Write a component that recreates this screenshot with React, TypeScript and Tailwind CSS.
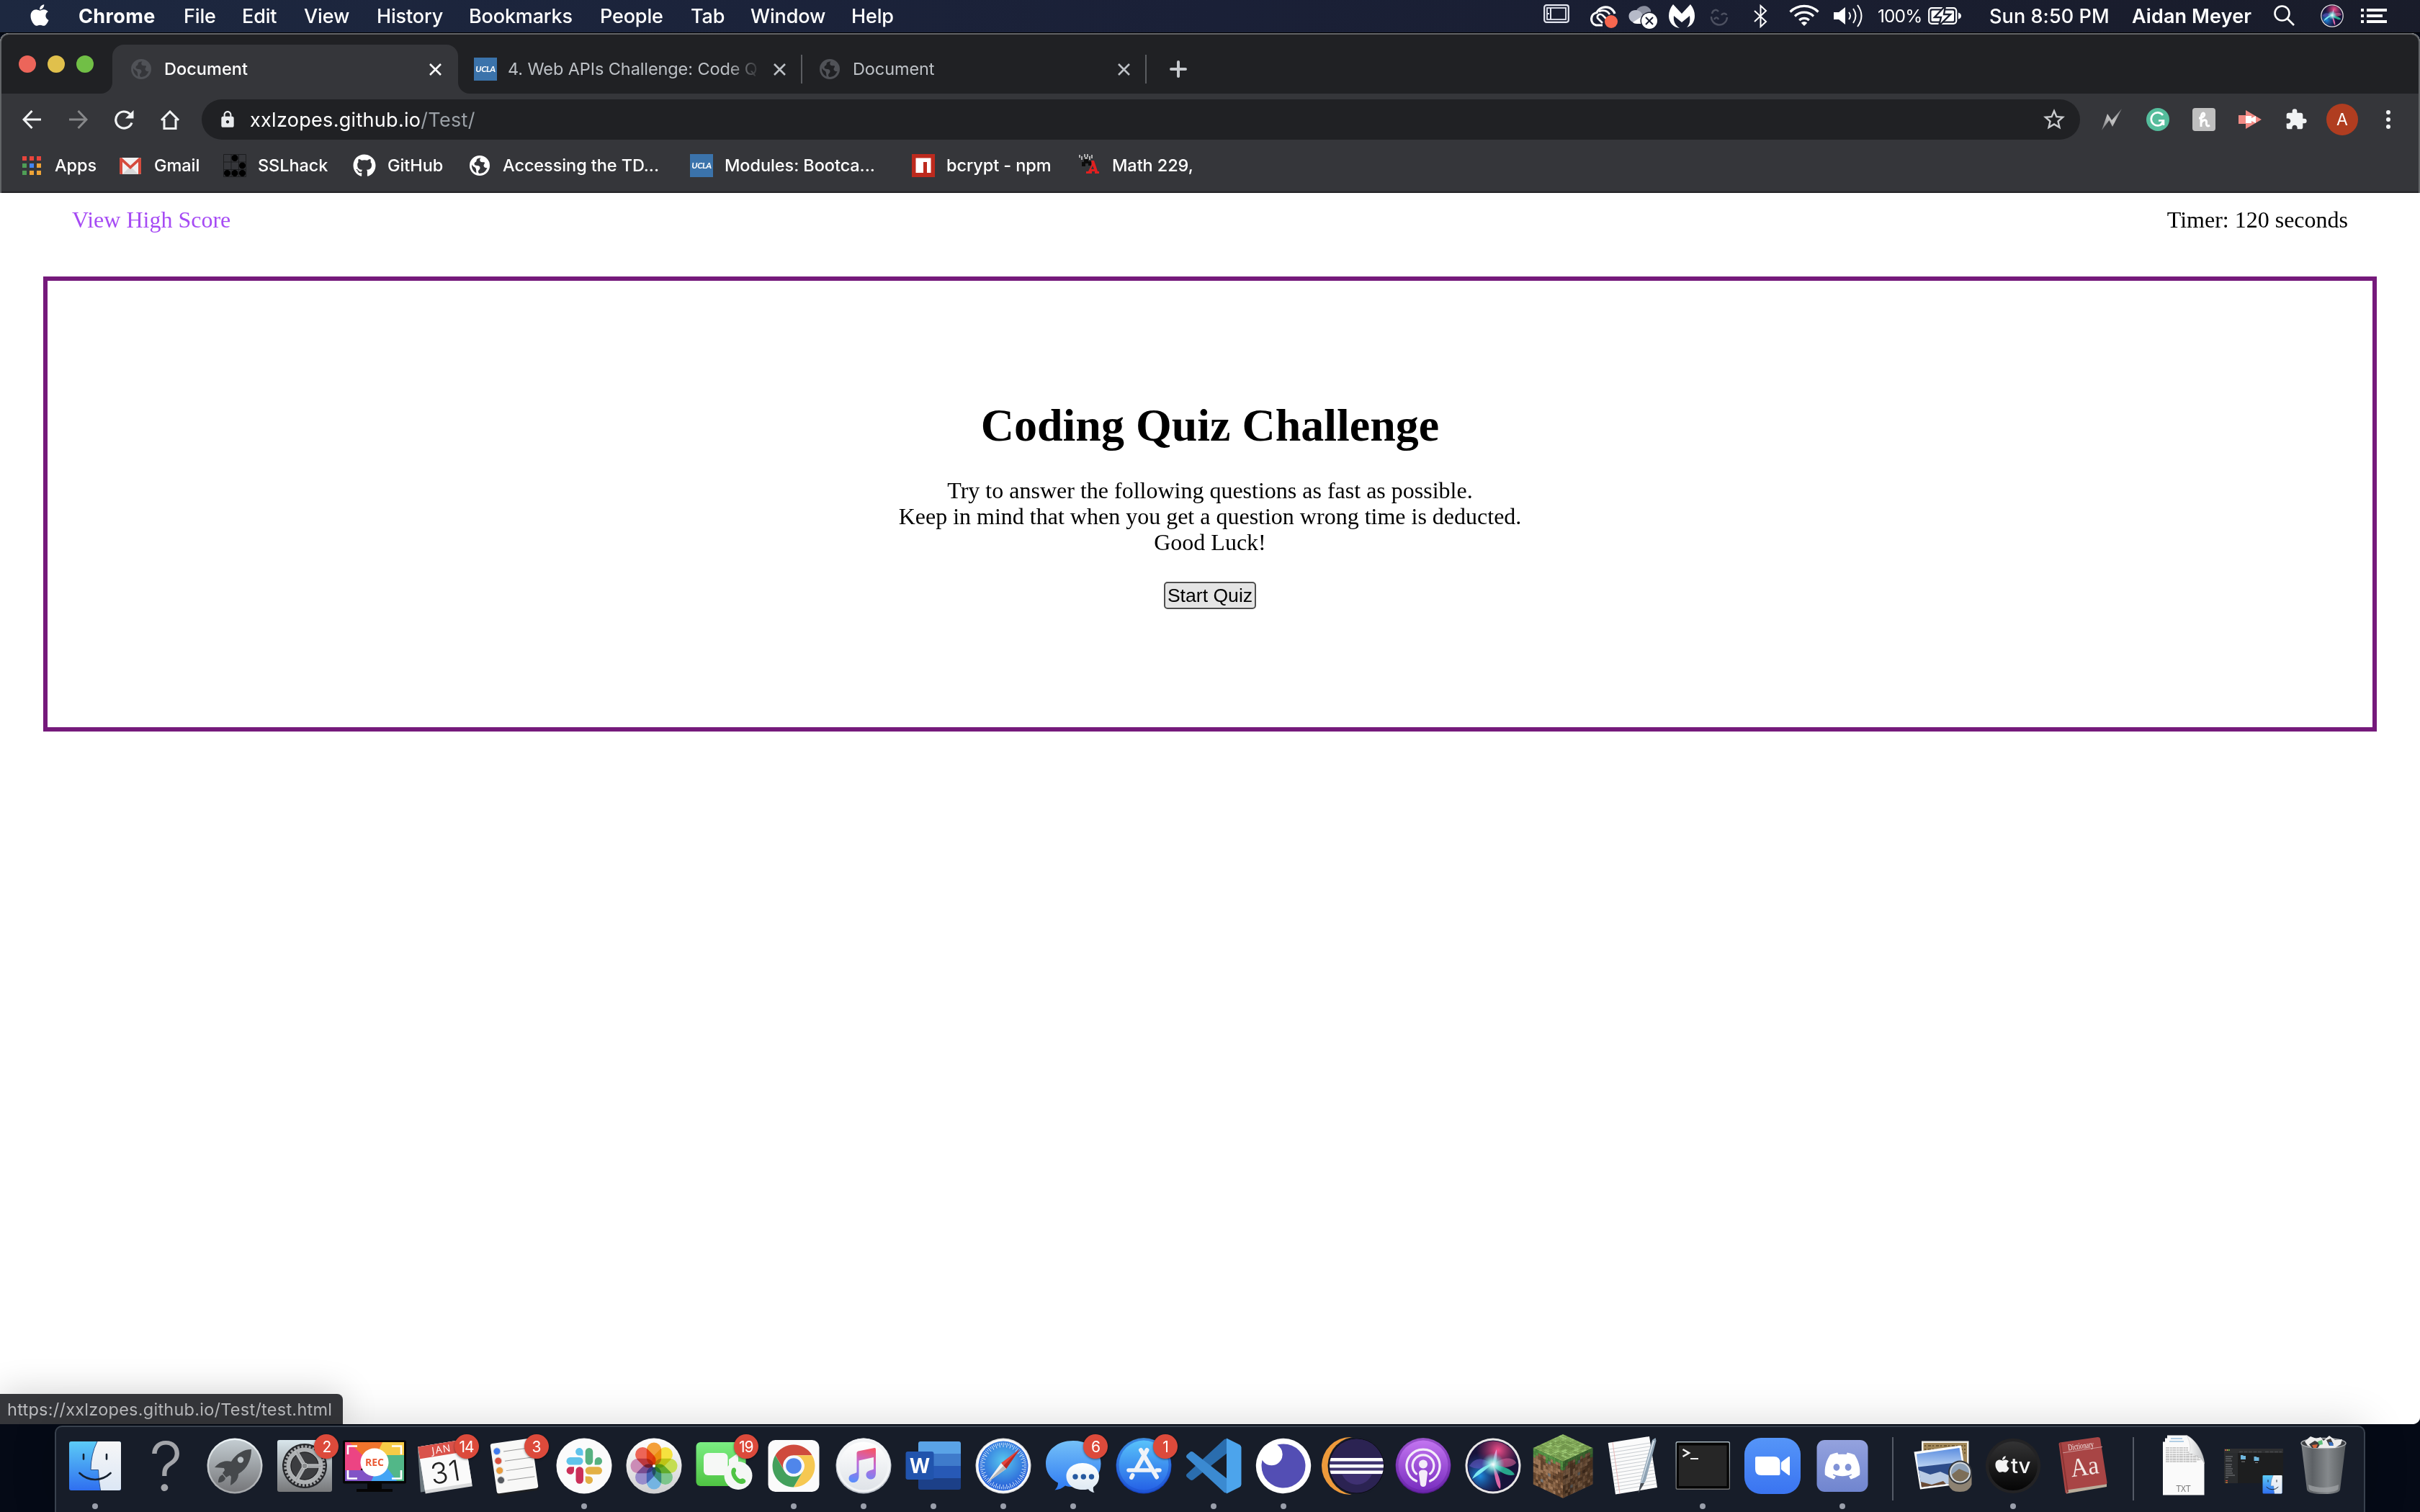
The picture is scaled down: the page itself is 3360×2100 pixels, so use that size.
import type { ReactNode } from "react";
import { FaApple, FaDiscord, FaGithub } from "react-icons/fa";
import { MdExtension, MdStarBorder, MdLock } from "react-icons/md";

/* ---------- menu bar ---------- */

const menus = [
  { label: "Chrome", cls: "w-[146px] font-bold tracking-[0.4px]" },
  { label: "File", cls: "w-[81px] font-medium" },
  { label: "Edit", cls: "w-[86px] font-medium" },
  { label: "View", cls: "w-[101px] font-medium" },
  { label: "History", cls: "w-[128px] font-medium" },
  { label: "Bookmarks", cls: "w-[182px] font-medium" },
  { label: "People", cls: "w-[126px] font-medium" },
  { label: "Tab", cls: "w-[83px] font-medium" },
  { label: "Window", cls: "w-[140px] font-medium" },
  { label: "Help", cls: "w-[80px] font-medium" },
];

function MenuBar() {
  return (
    <div className="flex h-[46px] shrink-0 items-center whitespace-nowrap border-b border-black bg-linear-to-r from-[#1d2840] via-[#1a2037] to-[#191c2a] pl-[40px] text-[27px] leading-none tracking-[-0.15px] text-white">
      <FaApple className="mt-[-3px] mr-[39px] h-[34px] w-[30px]" />
      {menus.map((m) => (
        <div key={m.label} className={m.cls}>{m.label}</div>
      ))}
      <div className="ml-auto flex h-full items-center">
        <svg className="mb-[7px] mr-[26px] h-[26px] w-[36px]" viewBox="0 0 36 26" fill="none" stroke="#e4e6f0">
          <rect x="1.2" y="1.2" width="33.6" height="23.6" rx="3" strokeWidth="2.2" />
          <rect x="5" y="5" width="26" height="16" strokeWidth="1.8" />
          <path d="M10 5V21M5 13H8" strokeWidth="2" />
        </svg>
        <svg className="mr-[14px] h-[32px] w-[42px]" viewBox="0 0 42 32" fill="none" stroke="#fff" strokeWidth="3.2">
          <path d="M20 28H11A9 9 0 0 1 12 10.500C15 4 23 1 30 4C34 6 36 9 37 12" />
          <path d="M20 25L13 18C12 14 16 11 20 14L25 19M15 9C21 6 27 8 30 13" strokeWidth="2.6" />
          <circle cx="32" cy="23" r="9" fill="#f7674f" stroke="none" />
        </svg>
        <svg className="mr-[15px] h-[36px] w-[41px]" viewBox="0 0 41 36">
          <path d="M10 13C11 3 26 -1 31 9V22H14Z" fill="#8b8f9f" />
          <path d="M12 27C-3 27-3 9 10 9C16 9 19 13 20 17L8 27Z" fill="#b6bac8" />
          <path d="M6 26L20 17L30 20V28H12C9 28 7 27 6 26Z" fill="#fff" />
          <circle cx="29" cy="24" r="12.500" fill="#1a1e30" />
          <circle cx="29" cy="24" r="11" fill="#fff" />
          <path d="M24 19L34 29M34 19L24 29" stroke="#1a1e30" strokeWidth="2" />
        </svg>
        <svg className="mr-[20px] h-[33px] w-[36px]" viewBox="0 0 36 33" fill="#fff">
          <path d="M6 0L18 13L30 0C34 5 36 10 36 16C36 24 32 30 25 32C29 28 30 23 29 16L18 25L7 16C6 24 9 29 15 33C6 32 0 25 0 16C0 10 2 5 6 0Z" />
        </svg>
        <svg className="mr-[35px] mt-[4px] h-[26px] w-[27px]" viewBox="0 0 27 26" fill="none" stroke="#4c5060" strokeWidth="2.4">
          <path d="M3 11A11 11 0 1 0 25 12M4 7C5 2 10 0 13 4M17 9C19 5 24 7 24 9M7 15C9 11 12 12 13 15" />
        </svg>
        <svg className="mr-[30px] h-[33px] w-[19px]" viewBox="0 0 19 33" fill="none" stroke="#fff" strokeWidth="2">
          <path d="M1 9L17 24L9.500 31V2L17 9L1 24" />
        </svg>
        <svg className="mb-[4px] mr-[20px] h-[30px] w-[42px]" viewBox="0 0 42 30" fill="none" stroke="#fff" strokeWidth="3.200">
          <path d="M1.500 10.500A27.500 27.500 0 0 1 40.500 10.500M8 16.500A18.500 18.500 0 0 1 34 16.500M14.200 22.200A9.800 9.800 0 0 1 27.800 22.200" />
          <path d="M21 30L16.800 25.700A6 6 0 0 1 25.200 25.700Z" fill="#fff" stroke="none" />
        </svg>
        <svg className="mb-[2px] mr-[20px] h-[32px] w-[41px]" viewBox="0 0 41 32" fill="none" stroke="#fff" strokeWidth="2">
          <path d="M0 11H7L16 4V28L7 21H0Z" fill="#fff" stroke="none" />
          <path d="M21 11Q25 16 21 21M27 6Q34 16 27 26M33 1Q44 16 33 31" />
        </svg>
        <div className="mr-[8px] w-[62px] text-[24.500px] tracking-[-0.900px]">100%</div>
        <svg className="mb-[2px] mr-[38px] h-[26px] w-[47px]" viewBox="0 0 47 26">
          <rect x="1.200" y="2.200" width="38" height="21.600" rx="4" fill="none" stroke="#fff" strokeWidth="2.200" />
          <rect x="4.500" y="5.500" width="31.500" height="15" rx="1.500" fill="#fff" />
          <path d="M42 8.500Q46 9.500 46 13T42 17.500Z" fill="#fff" />
          <path d="M24 -1L9 15H18L15 27L31 11H22Z" fill="#fff" stroke="#1a1e2e" strokeWidth="2.400" />
        </svg>
        <div className="w-[198px] font-medium tracking-[0.1px]">Sun 8:50 PM</div>
        <div className="w-[197px] font-semibold tracking-[0.1px]">Aidan Meyer</div>
        <svg className="mb-[2px] mr-[36px] h-[29px] w-[29px]" viewBox="0 0 29 29" fill="none" stroke="#fff" strokeWidth="2.600">
          <circle cx="11.500" cy="11.500" r="10" />
          <path d="M18.500 18.500L28 28" />
        </svg>
        <div className="mb-[2px] mr-[24px] size-[32px]"><SiriArt id="siri-menu" vb="9 9 78 78" /></div>
        <svg className="mb-[1px] mr-[46px] h-[20px] w-[36px]" viewBox="0 0 36 20" fill="#fff">
          <path d="M0 0H4V4H0ZM8 0H36V4H8ZM0 8H4V12H0ZM8 8H30V12H8ZM0 16H4V20H0ZM8 16H36V20H8Z" />
        </svg>
      </div>
    </div>
  );
}

/* ---------- browser chrome ---------- */

function Globe({ className }: { className: string }) {
  return (
    <svg className={className} viewBox="0 0 28 28" fill="currentColor">
      <path
        fillRule="evenodd"
        d="M14 0A14 14 0 1 1 14 28A14 14 0 1 1 14 0ZM15.500 3.200C11 3.600 9.500 5 9.500 7.500C9.500 9 7 9 6.500 11C6 13 8 14 10.500 14C13.500 14 14.500 15.500 14.500 17.500C14.500 19.500 12 20 12 22C12 23.500 12.500 24.500 13.500 25C19 25.200 23 21.500 24.500 17C22.500 17.500 20 16.500 19.500 14.500C19.200 12.500 21 12 21 10C21 8.500 18.500 9.500 16.500 9C14 8.500 13.500 5.500 15.500 3.200ZM3 12.500C2.500 18 5.500 22.500 9.500 24.300C9 21.500 9.500 19 8 17C6.500 15.500 4 15 3 12.500Z"
      />
    </svg>
  );
}

function Ucla() {
  return (
    <div className="flex size-[32px] shrink-0 items-center justify-center bg-[#3b73ab] font-['Lato'] text-[12px] font-bold italic leading-none tracking-[-0.5px] text-white">
      UCLA
    </div>
  );
}

function Close({ className }: { className: string }) {
  return (
    <svg className={className} viewBox="0 0 17 17" fill="none" stroke="currentColor" strokeWidth="2.600">
      <path d="M1 1L16 16M16 1L1 16" />
    </svg>
  );
}

function TabStrip() {
  return (
    <div className="flex h-[82px] text-[23.500px] leading-none tracking-[-0.1px]">
      <div className="flex w-[138px] gap-[16px] pl-[24px] pt-[29px]">
        <span className="size-[24px] rounded-full bg-[#ec655a]" />
        <span className="size-[24px] rounded-full bg-[#e0c04c]" />
        <span className="size-[24px] rounded-full bg-[#71bf46]" />
      </div>
      <svg className="mt-auto h-[16px] w-[16px]" viewBox="0 0 16 16"><path d="M16 0V16H0A16 16 0 0 0 16 0Z" fill="#35363a" /></svg>
      <div className="mt-[14px] flex h-[68px] w-[480px] items-center rounded-t-[16px] bg-[#35363a] pl-[26px] text-white">
        <Globe className="size-[28px] text-[#505257]" />
        <div className="ml-[18px] w-[368px] font-medium tracking-[0.05px]">Document</div>
        <Close className="size-[17px]" />
      </div>
      <svg className="mt-auto h-[16px] w-[16px]" viewBox="0 0 16 16"><path d="M0 0V16H16A16 16 0 0 1 0 0Z" fill="#35363a" /></svg>
      <div className="mt-[14px] flex h-[68px] items-center pl-[6px] text-[#bdc1c6]">
        <Ucla />
        <div className="ml-[15px] w-[353px] whitespace-nowrap leading-[32px] mask-r-from-86% mask-r-to-100%">4. Web APIs Challenge: Code Q</div>
        <Close className="ml-[16px] size-[17px]" />
        <div className="ml-[21px] h-[40px] w-[2px] bg-[#5b5d61]" />
        <Globe className="ml-[24px] size-[28px] text-[#505257]" />
        <div className="ml-[18px] w-[368px]">Document</div>
        <Close className="size-[17px]" />
        <div className="ml-[21px] h-[40px] w-[2px] bg-[#5b5d61]" />
        <svg className="ml-[32px] size-[24px]" viewBox="0 0 24 24" stroke="#c6c9cd" strokeWidth="4" strokeLinecap="round">
          <path d="M2 12H22M12 2V22" />
        </svg>
      </div>
    </div>
  );
}

function Toolbar() {
  return (
    <div className="flex h-[72px] items-center bg-[#35363a] pl-[29px] text-[#f1f3f4]">
      <svg className="h-[26px] w-[27px]" viewBox="0 0 27 26" fill="none" stroke="currentColor" strokeWidth="3">
        <path d="M26 13H2M13.500 1L2 13L13.500 25" />
      </svg>
      <svg className="ml-[37px] h-[26px] w-[27px] text-[#87888a]" viewBox="0 0 27 26" fill="none" stroke="currentColor" strokeWidth="3">
        <path d="M1 13H25M13.500 1L25 13L13.500 25" />
      </svg>
      <svg className="ml-[36px] h-[27px] w-[28px]" viewBox="0 0 28 27" fill="none" stroke="currentColor" strokeWidth="3.200">
        <path d="M25 17.500A11.500 11.500 0 1 1 22.500 5.500" />
        <path d="M27.500 0V11.500H16Z" fill="currentColor" stroke="none" />
      </svg>
      <svg className="ml-[36px] h-[27px] w-[28px]" viewBox="0 0 28 27" fill="none" stroke="currentColor" strokeWidth="3">
        <path d="M2 14L14 2L26 14M6 12V25.500H22V12" />
      </svg>
      <div className="ml-[30px] flex h-[56px] w-[2608px] items-center rounded-full bg-[#202124] pl-[23px] pr-[18px] text-[27px] leading-none tracking-[0.3px]">
        <MdLock className="h-[26px] w-[26px] text-[#e8eaed]" />
        <div className="ml-[18px] text-white">xxlzopes.github.io<span className="text-[#9aa0a6]">/Test/</span></div>
        <MdStarBorder className="ml-auto size-[36px] text-[#c9cbce]" />
      </div>
      <svg className="ml-[30px] h-[30px] w-[28px]" viewBox="0 0 28 30">
        <defs><linearGradient id="bolt" x1="1" y1="0" x2="0" y2="1"><stop stopColor="#77797c" /><stop offset=".5" stopColor="#c4c4c4" /><stop offset="1" stopColor="#737477" /></linearGradient></defs>
        <path d="M28 0L15 25L10.500 16L0 30L8 7L14 16Z" fill="url(#bolt)" />
      </svg>
      <svg className="ml-[34px] size-[32px]" viewBox="0 0 32 32" fill="none" stroke="#fff" strokeWidth="2.600">
        <circle cx="16" cy="16" r="16" fill="#55bd9c" stroke="none" />
        <path d="M23 10A9 9 0 1 0 23.500 20M17 17.500H24V24M24 18L20 23" />
      </svg>
      <div className="ml-[32px] flex size-[32px] items-center justify-center rounded-[4px] bg-[#bfbfbf]">
        <svg className="h-[22px] w-[20px]" viewBox="0 0 20 22" fill="none" stroke="#fff" strokeWidth="3">
          <path d="M3 9C9 9 12 5 10 2.500C8 1 6 4 6 10V21M6 16C8 11 14 10 13.500 15C13 20 15 21 18 19" />
        </svg>
      </div>
      <svg className="ml-[32px] h-[26px] w-[32px]" viewBox="0 0 32 26">
        <path d="M0 7H10V0L32 13L10 26V19H0Z" fill="#f28b85" />
        <path d="M10 8H18V11L24 8V18L18 15V18H10Z" fill="#fff" />
      </svg>
      <MdExtension className="ml-[32px] size-[32px]" />
      <div className="ml-[26px] flex size-[44px] items-center justify-center rounded-full bg-[#b03d20] text-[23px] leading-none text-white">A</div>
      <div className="ml-[39px] flex flex-col gap-[4px]">
        <span className="size-[6px] rounded-full bg-[#f1f3f4]" />
        <span className="size-[6px] rounded-full bg-[#f1f3f4]" />
        <span className="size-[6px] rounded-full bg-[#f1f3f4]" />
      </div>
    </div>
  );
}

function Bookmark({ icon, label, cls }: { icon: ReactNode; label: string; cls: string }) {
  return (
    <div className={"flex shrink-0 items-center whitespace-nowrap " + cls}>
      {icon}
      <span>{label}</span>
    </div>
  );
}

const appDots = ["#e8453c", "#e8453c", "#e8453c", "#4f9e56", "#4285f4", "#eda337", "#4f9e56", "#eda337", "#eda337"];

function BookmarksBar() {
  return (
    <div className="flex h-[64px] items-center bg-[#35363a] pb-[8px] pl-[29px] text-[23.500px] font-medium leading-none tracking-[-0.08px] text-white">
      <Bookmark
        cls="w-[135px] gap-[19px]"
        label="Apps"
        icon={
          <div className="grid grid-cols-3 gap-[4px]">
            {appDots.map((c, i) => <span key={i} className="size-[6px]" style={{ backgroundColor: c }} />)}
          </div>
        }
      />
      <Bookmark
        cls="w-[144px] gap-[18px]"
        label="Gmail"
        icon={
          <svg className="h-[23px] w-[30px]" viewBox="0 0 30 23">
            <rect width="30" height="23" rx="2" fill="#f1f1f1" />
            <path d="M4 23L15 12L26 23Z" fill="#d8d8d8" />
            <path d="M0 2Q0 0 2 0H3L15 11L27 0H28Q30 0 30 2V21Q30 23 28 23H26V6L15 16L4 6V23H2Q0 23 0 21Z" fill="#d54b3d" />
          </svg>
        }
      />
      <Bookmark
        cls="w-[180px] gap-[16px]"
        label="SSLhack"
        icon={
          <svg className="size-[32px]" viewBox="0 0 32 32">
            <path d="M.5.5H31.500V31.500H.5ZM11 0V32M21.500 0V32M0 11H32M0 21.500H32" fill="none" stroke="#1c1d1f" />
            <g fill="#000"><circle cx="16" cy="5.500" r="4.500" /><circle cx="26.500" cy="16" r="4.500" /><circle cx="5.500" cy="26.500" r="4.500" /><circle cx="16" cy="26.500" r="4.500" /><circle cx="26.500" cy="26.500" r="4.500" /></g>
          </svg>
        }
      />
      <Bookmark cls="w-[162px] gap-[16px]" label="GitHub" icon={<FaGithub className="size-[32px]" />} />
      <Bookmark cls="w-[306px] gap-[18px]" label="Accessing the TD..." icon={<Globe className="size-[28px]" />} />
      <Bookmark cls="w-[308px] gap-[16px]" label="Modules: Bootca..." icon={<Ucla />} />
      <Bookmark
        cls="w-[232px] gap-[16px]"
        label="bcrypt - npm"
        icon={
          <svg className="size-[32px]" viewBox="0 0 32 32"><path d="M0 0H32V32H0Z" fill="#bd2a1e" /><path d="M5.500 5.500H26.500V26H21V11H16V26H5.500Z" fill="#fff" /></svg>
        }
      />
      <Bookmark
        cls="gap-[18px]"
        label="Math 229,"
        icon={
          <svg className="mb-[4px] h-[28px] w-[28px]" viewBox="0 0 28 28">
            <path d="M1 1V5M4 3V8M8 0V4M12 0V4M15 3V8M18 1V6" stroke="#b4b4b4" strokeWidth="2" />
            <path d="M7 6H13V10H17V16H13V13H9V17H4V11H7Z" fill="#0c0c0c" />
            <path d="M8 4H12V7H8Z" fill="#a0a0a0" />
            <path d="M17 9H21L26 24H28V27H22V24H18V27H10V24H13L18 14Z" fill="#e02020" />
            <path d="M19 16L17 21H21Z" fill="#35363a" />
          </svg>
        }
      />
    </div>
  );
}

/* ---------- page ---------- */

function QuizPage() {
  return (
    <div className="relative flex-1 bg-white font-['Liberation_Serif',serif] text-[32px] leading-[36px] text-black">
      <div className="flex h-[116px] justify-between px-[100px] pt-[19px]">
        <a className="text-[#a64bf4]">View High Score</a>
        <div>Timer: 120 seconds</div>
      </div>
      <div className="mx-[60px] flex h-[632px] flex-col items-center border-6 border-[#751a7b] pt-[165px] text-center">
        <h1 className="text-[64px] font-bold leading-[72px]">Coding Quiz Challenge</h1>
        <p className="mt-[36px]">
          Try to answer the following questions as fast as possible.
          <br />
          Keep in mind that when you get a question wrong time is deducted.
          <br />
          Good Luck!
        </p>
        <button className="mt-[37px] flex h-[38px] w-[128px] items-center justify-center whitespace-nowrap rounded-[5px] border-2 border-[#4f4f4f] bg-[#e4e4e4] font-['Liberation_Sans',sans-serif] text-[26.600px] leading-none">
          Start Quiz
        </button>
      </div>
      <div className="absolute bottom-0 left-0 flex h-[42px] w-[476px] items-center rounded-tr-[8px] bg-[#35363a] pl-[10px] pt-px font-['Inter',sans-serif] text-[23.500px] leading-none tracking-[0.25px] text-[#bcbdc0] shadow-[0_0_50px_rgba(0,0,0,0.2)]">
        https://xxlzopes.github.io/Test/test.html
      </div>
    </div>
  );
}

/* ---------- dock icons, each on a 96 x 96 board ---------- */

function Art({ children, vb = "0 0 96 96" }: { children: ReactNode; vb?: string }) {
  return <svg className="size-full overflow-visible" viewBox={vb}>{children}</svg>;
}

function Grad({ id, from, to, h }: { id: string; from: string; to: string; h?: boolean }) {
  return (
    <linearGradient id={id} x1="0" y1="0" x2={h ? "1" : "0"} y2={h ? "0" : "1"}>
      <stop stopColor={from} />
      <stop offset="1" stopColor={to} />
    </linearGradient>
  );
}

function FinderShape({ id }: { id: string }) {
  return (
    <>
      <defs>
        <Grad id={id + "a"} from="#5ccbf6" to="#2f6ff0" />
        <Grad id={id + "b"} from="#f6f6f7" to="#dce7f5" />
      </defs>
      <rect x="12" y="14" width="72" height="68" rx="3" fill={`url(#${id}a)`} />
      <path d="M51 14H81Q84 14 84 17V79Q84 82 81 82H55.500Q53 70 52.500 54H42Q42 32 51 14Z" fill={`url(#${id}b)`} />
      <path d="M51 14Q42 32 42 53.500H52.500Q53 70 55.500 82" fill="none" stroke="#26508c" strokeWidth="1" />
      <path d="M32 32V38.500M64 32V38.500M26.500 58Q36 67 48 67T69.500 58" fill="none" stroke="#15202e" strokeWidth="2.600" strokeLinecap="round" />
    </>
  );
}

const Finder = () => <Art><FinderShape id="fnd" /></Art>;

const Question = () => (
  <Art>
    <text x="49.500" y="82" textAnchor="middle" fontFamily="Inter, sans-serif" fontWeight="300" fontSize="93" fill="#a3a5aa">?</text>
  </Art>
);

const Launchpad = () => (
  <Art>
    <defs><Grad id="lp1" from="#c3ccd1" to="#76777a" /><Grad id="lp2" from="#eef5f8" to="#a3a5a8" /></defs>
    <circle cx="48" cy="48" r="38.500" fill="url(#lp2)" />
    <circle cx="48" cy="48" r="36" fill="url(#lp1)" />
    <path d="M71 25C60 25 50 31 43 42C35 40 27 42 20 50L33 51L34 54L31 58L36 64L41 61L43 63L42 75C49 71 53 66 53 59C65 52 71 40 71 25Z" fill="#45484b" />
    <circle cx="56" cy="39.500" r="4.200" fill="#b9c0c4" />
    <path d="M31 60C26 62 25 67 25 71C30 71 34 69 35 65Z" fill="#45484b" />
  </Art>
);

const Settings = () => (
  <Art>
    <defs><Grad id="st1" from="#d9e6ec" to="#77787a" /><Grad id="st2" from="#b9bcbe" to="#8f9193" /></defs>
    <rect x="10" y="12" width="76" height="72" rx="3" fill="url(#st1)" />
    <circle cx="48" cy="48" r="31" fill="#26272a" />
    <circle cx="48" cy="48" r="27" fill="none" stroke="#a4a6a8" strokeWidth="3.500" strokeDasharray="3 2.300" />
    <circle cx="48" cy="48" r="22.500" fill="#3c3d40" stroke="#aeb1b3" strokeWidth="6" />
    <circle cx="48" cy="48" r="19" fill="none" stroke="#1d1d1f" strokeWidth="1" />
    {[0, 120, 240].map((a) => <path key={a} d="M46 48H50V48H72V52H50Z" fill="url(#st2)" stroke="#b5b7b9" strokeWidth="1.500" transform={`rotate(${a} 48 48) translate(0 -2)`} />)}
    <circle cx="48" cy="48" r="4" fill="#8a8c8e" stroke="#c8cacb" />
  </Art>
);

const Recorder = () => (
  <Art>
    <clipPath id="rc"><rect x="7" y="15" width="82" height="54" /></clipPath>
    <rect x="4" y="12.500" width="88" height="60" rx="2.500" fill="#060607" />
    <path d="M38 72H58V80H73V84H23V80H38Z" fill="#060607" />
    <g clipPath="url(#rc)">
      <path d="M7 15H20L36 37L28 56H7Z" fill="#ec4483" />
      <path d="M13 15H60L55 34H32Z" fill="#f0742c" />
      <path d="M59 15H90V33H60L52 30Z" fill="#f7cb46" />
      <path d="M58 33H90V70H76L58 46Z" fill="#52b788" />
      <path d="M7 54H38L52 60L44 70H7Z" fill="#8154c6" />
      <path d="M43 70L52 50L62 46L80 70Z" fill="#43a5f5" />
    </g>
    <circle cx="48" cy="43" r="19.500" fill="#fff" />
    <path d="M11 32V20.500H24M72 20.500H85V32M85 54V65.500H72M24 65.500H11V54" fill="none" stroke="#fff" strokeWidth="2.600" />
    <text x="48" y="48" textAnchor="middle" fontFamily="Open Sans, sans-serif" fontWeight="700" fontSize="14" textLength="26" lengthAdjust="spacingAndGlyphs" fill="#ea5a35">REC</text>
  </Art>
);

const CalendarIcon = () => (
  <Art>
    <path d="M11 24L15 84.500L85 75L81 60Z" fill="#6f7a80" />
    <g transform="rotate(-9 48 48)">
      <rect x="16" y="16" width="66" height="66" fill="#d9dadb" />
      <rect x="16" y="16" width="66" height="61" fill="#fafafa" />
      <rect x="16" y="16" width="66" height="17" fill="#d9524a" />
      <text x="47" y="29.500" textAnchor="middle" fontFamily="Open Sans, sans-serif" fontSize="14" textLength="26" fill="#fff">JAN</text>
      <text x="48" y="71" textAnchor="middle" fontFamily="Inter, sans-serif" fontWeight="300" fontSize="40" textLength="41" fill="#222">31</text>
    </g>
  </Art>
);

const Reminders = () => (
  <Art>
    <g transform="rotate(-8 48 48)">
      <rect x="19" y="15" width="58" height="71" rx="3" fill="#1d1f22" />
      <rect x="19" y="13" width="58" height="70" rx="3" fill="#f8f8f7" />
      {["#3f7bf0", "#d9503f", "#eb9c3c", "#55595f"].map((c, i) => (
        <g key={c}>
          <circle cx="27" cy={24.5 + i * 13.5} r="5" fill={c} stroke="#dcdcdc" />
          <path d={`M36 ${26 + i * 13.5}H74`} stroke="#9a9a9a" />
        </g>
      ))}
    </g>
  </Art>
);

const Slack = () => (
  <Art>
    <circle cx="48" cy="48" r="38.500" fill="#fbfbfb" />
    <g fill="#5fc3ea"><rect x="23.500" y="36" width="23" height="10.500" rx="5.200" /><path d="M46.500 33.500H41.500A5.200 5.200 0 1 1 46.500 28Z" /></g>
    <g fill="#56b180"><rect x="49.700" y="23" width="10.500" height="23.500" rx="5.200" /><path d="M62.700 46.500V41.500A5.200 5.200 0 1 1 68 46.500Z" /></g>
    <g fill="#cb2f58"><rect x="36.500" y="49.300" width="10.500" height="23.500" rx="5.200" /><path d="M34 49.300V54.500A5.200 5.200 0 1 1 28.500 49.300Z" /></g>
    <g fill="#e3b045"><rect x="49.700" y="49.300" width="23.300" height="10.500" rx="5.200" /><path d="M49.700 62.500H55A5.200 5.200 0 1 1 49.700 67.500Z" /></g>
  </Art>
);

const petals = ["#f4a03a", "#f6e23f", "#c4dd52", "#7dc58c", "#74b4e2", "#978ccb", "#cb8cb6", "#ed6557"];

const Photos = () => (
  <Art>
    <defs><Grad id="ph" from="#ffffff" to="#cfcfd1" /></defs>
    <circle cx="48" cy="48" r="38.500" fill="url(#ph)" />
    <g className="isolate">
      {petals.map((c, i) => (
        <rect key={c} x="37.800" y="15.500" width="20.400" height="32" rx="10.200" fill={c} className="mix-blend-multiply" transform={`rotate(${i * 45} 48 48)`} />
      ))}
    </g>
    <circle cx="48" cy="48" r="2" fill="#fff" />
  </Art>
);

const FaceTime = () => (
  <Art>
    <defs><Grad id="ft" from="#7bee83" to="#4fc443" /></defs>
    <rect x="9.500" y="15" width="69" height="61" rx="6" fill="url(#ft)" />
    <rect x="20" y="30" width="33.500" height="31" rx="6" fill="#f6f8f6" />
    <path d="M55 39L65 32Q68 31 68 34V48H55Z" fill="#f6f8f6" />
    <circle cx="68" cy="61.500" r="19.500" fill="#f5f7f5" />
    <path d="M59 53C60 50 63 50 64.500 52C66 55 64 57 64 58C65 62 68 65 70 66C72 67 73 64 76 66C79 68 79 70 76.500 72C68 77 55 62 59 53Z" fill="#4fc443" />
  </Art>
);

const sectors = [
  { fill: "#cf4a3d", turn: 0 },
  { fill: "#f6c851", turn: 120 },
  { fill: "#43a05c", turn: 240 },
];

const Chrome = () => (
  <Art>
    <rect x="12.500" y="12" width="71" height="72" rx="10" fill="#fbfbfb" />
    {sectors.map((s) => (
      <path key={s.fill} d="M22.500 33.200A29.500 29.500 0 0 1 73.500 33.200H48A14.700 14.700 0 0 0 35.200 55.300Z" fill={s.fill} transform={`rotate(${s.turn} 48 48)`} />
    ))}
    <circle cx="48" cy="48" r="13.500" fill="#f3f6fd" />
    <circle cx="48" cy="48" r="10.800" fill="#5086ea" />
  </Art>
);

const Music = () => (
  <Art>
    <defs>
      <Grad id="mu1" from="#ffffff" to="#dfe3e8" />
      <linearGradient id="mu2" x1=".6" y1="0" x2=".4" y2="1"><stop stopColor="#f4566a" /><stop offset=".45" stopColor="#c06ad8" /><stop offset="1" stopColor="#5b8cfa" /></linearGradient>
    </defs>
    <circle cx="48" cy="48" r="38.500" fill="#bcc2ca" />
    <circle cx="48" cy="47" r="37.500" fill="#f2f4f6" />
    <circle cx="48" cy="48" r="33.500" fill="url(#mu1)" />
    <path d="M38.500 30Q38.500 28 40.500 27.500L63 23Q65 22.600 65 25V58C65 70 51.500 68 51.500 60.500C51.500 54.500 58 54.500 62 52.500V36L41.500 40.500V62C41.500 74 27.500 73 27.500 65.500C27.500 59 35 59.500 38.500 57Z" fill="url(#mu2)" />
  </Art>
);

const Word = () => (
  <Art>
    <path d="M27 31.500V17Q27 14 30 14H83Q86 14 86 17V31.500Z" fill="#5aa3e6" />
    <path d="M27 31H86V48.500H27Z" fill="#3f7bcb" />
    <path d="M27 48H86V65H27Z" fill="#2759b6" />
    <path d="M27 65H86V78Q86 81 83 81H30Q27 81 27 78Z" fill="#1c4088" />
    <rect x="9.500" y="28" width="39" height="39" rx="3" fill="#2154ad" />
    <text x="29" y="57.500" textAnchor="middle" fontFamily="Open Sans, sans-serif" fontWeight="700" fontSize="28" textLength="27" lengthAdjust="spacingAndGlyphs" fill="#fff">W</text>
  </Art>
);

const Safari = () => (
  <Art>
    <defs><radialGradient id="sf" cy=".4"><stop stopColor="#58c7ee" /><stop offset="1" stopColor="#2c68da" /></radialGradient></defs>
    <circle cx="48" cy="48" r="38.500" fill="#dedede" />
    <circle cx="48" cy="48" r="37" fill="#fafafa" />
    <circle cx="48" cy="48" r="34.500" fill="url(#sf)" />
    {Array.from({ length: 72 }, (_, i) => (
      <path key={i} d={i % 2 ? "M48 15.500V19" : "M48 15.500V22"} stroke="#d9ecfb" strokeWidth=".9" transform={`rotate(${i * 5} 48 48)`} />
    ))}
    <path d="M71 24.500L45 44L52 52Z" fill="#e5453d" />
    <path d="M71 24.500L48 48L52 52Z" fill="#b92b25" />
    <path d="M25 71.500L45 44L52 52Z" fill="#f1f1f1" />
    <path d="M25 71.500L48 48L52 52Z" fill="#b8b8b8" />
  </Art>
);

const Messages = () => (
  <Art>
    <defs><Grad id="ms" from="#74c0f8" to="#2f7bf3" /><Grad id="ms2" from="#ffffff" to="#dbe7f2" /></defs>
    <path d="M48 13C70 13 86.500 26 86.500 45S70 77 48 77C44 77 40 76.500 37 75.500C33 79 28 81 22.500 81.500C26 78 27 75 27 71.500C16 66 10 56 10 45C10 26 26 13 48 13Z" fill="url(#ms)" />
    <path d="M61 44C74 44 84 52 84 62.500C84 69 81 74 76 77.500C75.500 80.500 76 83 77.500 85C73.500 84.500 70.500 82.500 69 80.200C52 84 38.500 75 38.500 62.500C38.500 52 48 44 61 44Z" fill="url(#ms2)" />
    <g fill="#2759a0"><circle cx="51" cy="63" r="3.700" /><circle cx="62.300" cy="63" r="3.700" /><circle cx="73.500" cy="63" r="3.700" /></g>
  </Art>
);

const AppStore = () => (
  <Art>
    <defs><Grad id="as" from="#58c2fa" to="#2562e6" /></defs>
    <circle cx="48" cy="48" r="38.500" fill="#1746c4" />
    <circle cx="48" cy="47" r="38" fill="url(#as)" opacity=".55" />
    <circle cx="48" cy="47" r="34.500" fill="url(#as)" />
    <g fill="none" stroke="#f0f3f8" strokeLinecap="round">
      <path d="M27 54H57" strokeWidth="5.500" />
      <path d="M66 54H70" strokeWidth="5.500" />
      <path d="M52.500 26L38 52" strokeWidth="6" />
      <path d="M44 26L66 63.500" strokeWidth="6" />
      <path d="M32.500 61L31 64" strokeWidth="6" />
    </g>
  </Art>
);

const VSCode = () => (
  <Art>
    <path d="M10 61Q10 60 11 59L63 11L67 10V30L20 67Q17 69 14.500 66.500L11 63.500Q10 62.500 10 61Z" fill="#2a6dae" />
    <path d="M10 35Q10 36 11 37L63 85L67 86V66L20 29Q17 27 14.500 29.500L11 32.500Q10 33.500 10 35Z" fill="#3b8ad1" />
    <path d="M66 9.500L84 18.500Q86.500 20 86.500 22.500V73.500Q86.500 76 84 77.500L66 86.500Z" fill="#4ca4ec" />
  </Art>
);

const Insomnia = () => (
  <Art>
    <circle cx="48" cy="48" r="38.200" fill="#fff" />
    <circle cx="48" cy="48" r="30.500" fill="#534eb4" />
    <circle cx="31.500" cy="32" r="15.200" fill="#fff" />
  </Art>
);

const Eclipse = () => (
  <Art>
    <clipPath id="ec"><circle cx="52.500" cy="48" r="37.500" /></clipPath>
    <circle cx="44" cy="48" r="40" fill="#ee9a3b" />
    <circle cx="53" cy="48" r="40.500" fill="#171d29" />
    <circle cx="52.500" cy="48" r="38.300" fill="#0a0a10" />
    <g clipPath="url(#ec)">
      <rect x="14" y="9" width="78" height="78" fill="#2b2352" />
      <circle cx="53" cy="52" r="22" fill="#3f3172" />
      <path d="M14 9H92V38H14Z" fill="#2b2352" />
      <path d="M14 36.500H92V60H14Z" fill="#3f3470" />
      <path d="M14 37H92V41.500H14ZM14 46H92V50.500H14ZM14 54.500H92V59H14Z" fill="#fff" />
    </g>
  </Art>
);

const Podcasts = () => (
  <Art>
    <defs><Grad id="pc" from="#c274f0" to="#7a2fc0" /></defs>
    <circle cx="48" cy="48" r="38.500" fill="#5a1c94" />
    <circle cx="48" cy="47" r="38" fill="url(#pc)" opacity=".6" />
    <circle cx="48" cy="47" r="34.500" fill="url(#pc)" />
    <g fill="none" stroke="#f4edf9" strokeWidth="3.200" strokeLinecap="round">
      <path d="M38.500 69A23 23 0 1 1 57.500 69" />
      <path d="M38.500 59A14.800 14.800 0 1 1 57.500 59" />
    </g>
    <circle cx="48" cy="45.500" r="6" fill="#f4edf9" />
    <path d="M42 58Q42 53.500 48 53.500T54 58L52 74Q51 77 48 77T44 74Z" fill="#f4edf9" />
  </Art>
);

function SiriArt({ id, vb }: { id: string; vb?: string }) {
  return (
    <Art vb={vb}>
      <defs>
        <radialGradient id={id + "r"}><stop stopColor="#f04f8b" /><stop offset="1" stopColor="#c2386f" stopOpacity="0" /></radialGradient>
        <radialGradient id={id + "b"}><stop stopColor="#1d8de0" /><stop offset="1" stopColor="#1b3f8f" stopOpacity="0" /></radialGradient>
        <radialGradient id={id + "w"}><stop stopColor="#fff" /><stop offset=".4" stopColor="#8ff0e8" stopOpacity=".8" /><stop offset="1" stopColor="#5fd0e0" stopOpacity="0" /></radialGradient>
        <clipPath id={id + "c"}><circle cx="48" cy="48" r="34.500" /></clipPath>
      </defs>
      <circle cx="48" cy="48" r="38.500" fill="#e8e6e6" />
      <circle cx="48" cy="48" r="35.500" fill="#17133a" />
      <g clipPath={`url(#${id}c)`}>
        <circle cx="55" cy="26" r="30" fill={`url(#${id}r)`} />
        <circle cx="30" cy="62" r="32" fill={`url(#${id}b)`} />
        <path d="M48 46C30 34 22 38 15 48C24 54 38 52 48 48Z" fill="#6b58c8" opacity=".55" />
        <path d="M48 46C62 34 78 36 80 44C72 52 58 50 48 48Z" fill="#e06aa0" opacity=".55" />
        <path d="M48 46C60 48 74 52 78 60C70 64 56 56 48 48Z" fill="#2ac09a" opacity=".85" />
        <path d="M48 46C56 60 60 72 58 80C52 76 50 60 48 48Z" fill="#ef6fb0" opacity=".9" />
        <path d="M48 44C38 54 26 62 19 66C24 54 36 48 48 44Z" fill="#7fe8f0" />
        <path d="M48 48C48 36 51 28 53 25C54 34 53 42 50 48Z" fill="#e3a8e0" opacity=".85" />
      </g>
      <circle cx="48" cy="46" r="16" fill={`url(#${id}w)`} />
    </Art>
  );
}

/* Grass block: 12 x 12 tiles per face, shaded by a small integer hash. */
const tile = (i: number, j: number, seed: number) => {
  let h = (i + 1) * 374761393 + (j + 1) * 668265263 + seed * 974711;
  h = Math.imul(h ^ (h >>> 13), 1274126177);
  return ((h ^ (h >>> 16)) >>> 0) % 11;
};
const grassTones = ["#86ad5a", "#92bb66", "#7ba251", "#9dc972", "#8ab35e", "#769c4e"];
const dirtTones = ["#8a6242", "#9a7150", "#6a4930", "#a87e5c", "#7a5538", "#553a26"];
const N = 12;

function Face({ matrix, kind, shade }: { matrix: string; kind: "top" | "side"; shade: number }) {
  const cells: ReactNode[] = [];
  for (let j = 0; j < N; j++) {
    for (let i = 0; i < N; i++) {
      const t = tile(i, j, kind === "top" ? 3 : 7);
      const fringe = 1 + (tile(i, 0, 5) % 3);
      const fill = kind === "top" ? grassTones[t % 6] : j < fringe ? (t % 2 ? "#4c8a3f" : "#5b9a48") : t === 5 && i % 3 === 0 ? "#7c7c7c" : dirtTones[t % 6];
      cells.push(<rect key={`${i}-${j}`} x={i} y={j} width="1.060" height="1.060" fill={fill} />);
    }
  }
  return (
    <g transform={matrix}>
      {cells}
      <rect width={N} height={N} fill="#000" opacity={shade} />
    </g>
  );
}

const Minecraft = () => (
  <Art>
    <Face kind="top" shade={0} matrix="matrix(3.430 1.580 -3.430 1.580 48 4)" />
    <Face kind="side" shade={0.05} matrix="matrix(3.430 1.600 0 4.200 6.800 22.900)" />
    <Face kind="side" shade={0.35} matrix="matrix(3.430 -1.600 0 4.200 48 42)" />
  </Art>
);

const TextEdit = () => (
  <Art>
    <path d="M13.700 16L71 7L82 78L24 87.500Z" fill="#fbfbfb" />
    {Array.from({ length: 13 }, (_, i) => (
      <path key={i} d={`M${15.2 + i * 0.72} ${25 + i * 4.75}L${72.2 + i * 0.75} ${16 + i * 4.72}`} stroke="#c3c7cc" strokeWidth=".9" />
    ))}
    <path d="M20 15L30 86.500" stroke="#e9a9a9" strokeWidth=".8" />
    <path d="M75 12L79.500 9L80.500 13L66 68L56 85L60 65Z" fill="#8fa3b4" />
    <path d="M76 13L61 66L57 82L62 66L78 13Z" fill="#dce6ee" />
    <path d="M59 72L64 72L55.500 86Z" fill="#4a4f55" />
  </Art>
);

const Terminal = () => (
  <Art>
    <defs><Grad id="tm" from="#a9b8c0" to="#6f6f70" /></defs>
    <rect x="10.500" y="14" width="75.500" height="67" rx="2.500" fill="url(#tm)" />
    <rect x="11.800" y="15.500" width="73" height="64" rx="1.500" fill="#050505" />
    <rect x="15" y="19.500" width="66.500" height="56.500" fill="#262626" />
    <path d="M20.500 25L29 30L20.500 35" fill="none" stroke="#f2f2f2" strokeWidth="2.600" />
    <path d="M31 38H42" stroke="#f2f2f2" strokeWidth="2" />
  </Art>
);

const Zoom = () => (
  <Art>
    <defs><Grad id="zm" from="#5595f8" to="#3a74f1" /></defs>
    <rect x="9" y="9" width="78" height="78" rx="23" fill="url(#zm)" />
    <path d="M24 37Q24 35 26 35H50Q58.500 35 58.500 43.500V59Q58.500 61 56.500 61H32.500Q24 61 24 52.500Z" fill="#fff" />
    <path d="M60 44Q60 43 61 42.200L70.500 35Q72 34.500 72 36V60Q72 61.500 70.500 61L61 53.800Q60 53 60 52Z" fill="#fff" />
  </Art>
);

const Discord = () => (
  <Art>
    <defs><Grad id="dc" from="#94a2de" to="#7085cf" /></defs>
    <rect x="12.500" y="12" width="71" height="72" rx="11" fill="url(#dc)" />
    <FaDiscord x="21.500" y="21.500" size={53} color="#fff" />
  </Art>
);

const Preview = () => (
  <Art>
    <defs><Grad id="pv" from="#5b8de0" to="#bcd4f2" /></defs>
    <rect x="18" y="13.500" width="65.500" height="58" fill="#f3f1ea" />
    <rect x="20.500" y="16" width="60.500" height="53" fill="#a08657" />
    <path d="M22 20H80M22 25H80M22 30H80" stroke="#6d5733" strokeDasharray="2 3 4 2" strokeWidth="2" />
    <path d="M7.500 28.500L73 19.500L81 72L16 80.500Z" fill="#fbfbfa" />
    <path d="M11 31.500L70.500 23L74 43L13 50Z" fill="url(#pv)" />
    <path d="M13 49.500L74 42.500L78 69.500L18 77.500Z" fill="#2d4c8a" />
    <path d="M14 54L30 60L44 56L60 63L76 58L78 69.500L18 77.500Z" fill="#b9cbe4" />
    <path d="M18 77.500L17 70L32 74L48 69L52 73Z" fill="#6b4b34" />
    <path d="M55.500 58V74Q58 84 71 84T87.500 74V58Z" fill="#8d8272" />
    <circle cx="71.500" cy="57" r="16.500" fill="#33363b" />
    <circle cx="71.500" cy="57" r="14.500" fill="#d5dade" />
    <circle cx="71.500" cy="57" r="12.500" fill="#8fa2b8" />
    <path d="M60 60L70 52L84 58Q82 69 71 69.500Q62 69 60 60Z" fill="#7d6e58" />
  </Art>
);

const AppleTV = () => (
  <Art>
    <defs><Grad id="tv" from="#333334" to="#050505" /></defs>
    <circle cx="48" cy="48" r="38.200" fill="#232325" />
    <circle cx="48" cy="48" r="34" fill="url(#tv)" />
    <FaApple x="20" y="32.500" size={26} color="#f4f4f4" />
    <text x="45" y="57.500" fontFamily="Inter, sans-serif" fontWeight="500" fontSize="29" textLength="27.500" lengthAdjust="spacingAndGlyphs" fill="#f4f4f4">tv</text>
  </Art>
);

const Dictionary = () => (
  <Art>
    <path d="M25 86.500L81 77V71L24 78Z" fill="#b9ad9b" />
    <path d="M14.500 17.500Q14.500 16 16 15.500L68.500 8Q71.500 8 72 10L81.500 71Q81.500 73 80 73.500L25 81.500L26 87L23.500 85Z" fill="#a84545" />
    <path d="M19 30L75 21.500" stroke="#d09a9a" strokeWidth="1" />
    <path d="M17 16L27 85" stroke="#8c3434" strokeWidth="2" />
    <g transform="rotate(-8 48 48)" fontFamily="Liberation Serif, serif" fill="#f3e9e6" textAnchor="middle">
      <text x="49" y="24" fontSize="12" textLength="36" lengthAdjust="spacingAndGlyphs">Dictionary</text>
      <text x="50" y="61" fontSize="36" textLength="39" lengthAdjust="spacingAndGlyphs">Aa</text>
    </g>
  </Art>
);

const TxtFile = () => (
  <Art>
    <defs><Grad id="tx" from="#ffffff" to="#bfc1c3" h /></defs>
    <path d="M19 14.500H22V9.500H25V5.500H52C66 14 76.500 36 76.500 45V88.500H19Z" fill="#fafafa" />
    <path d="M52 5.500C58 16 58 26 55 31C66 32 74 38 76.500 45C76 32 66 12 52 5.500Z" fill="url(#tx)" stroke="#c9c9c9" strokeWidth=".6" />
    <path d="M30 10H46M28 14H48" stroke="#6ba2cf" strokeWidth="1" />
    <path d="M23 23H54M23 26H54M23 29H55M23 32H60M23 34.500H68M23 37H70M23 39.500H71M23 42H66" stroke="#9b9b9b" strokeWidth="1" strokeDasharray="5 .8 3 .6" />
    <text x="47.500" y="84" textAnchor="middle" fontFamily="Open Sans, sans-serif" fontSize="12.500" textLength="20" lengthAdjust="spacingAndGlyphs" fill="#757575">TXT</text>
  </Art>
);

const FinderWindow = () => (
  <Art>
    <rect x="7" y="24" width="82" height="48" rx="1" fill="#1d1e1f" />
    <path d="M7 24H89V30H7Z" fill="#2e2f31" />
    <path d="M7 30H26V72H7Z" fill="#2a2c2e" />
    <circle cx="9" cy="26" r="1" fill="#ec655a" /><circle cx="11.500" cy="26" r="1" fill="#e0c04c" /><circle cx="14" cy="26" r="1" fill="#71bf46" />
    <path d="M28 28.500H60M64 28.500H87" stroke="#47494c" strokeWidth="1.600" strokeDasharray="5 1.500" />
    <path d="M9 35H19M9 38H17M9 41H18M9 46H18M9 49H17M9 52H19M9 55H18M9 58H19M9 61H22M9 64H13" stroke="#85878a" strokeWidth=".9" />
    <path d="M9 68.500H12" stroke="#d9503f" strokeWidth="1.200" /><path d="M9 71H12" stroke="#e8943c" strokeWidth="1.200" />
    <path d="M30 33H33L34 34H37V39H30ZM48.500 35H51.500L52.500 36H55.500V41H48.500Z" fill="#6fb6dd" />
    <path d="M31 42H36M50 43.500H54" stroke="#9b9b9b" strokeWidth=".8" />
    <g transform="translate(56 55.700) scale(.375)"><FinderShape id="fnw" /></g>
  </Art>
);

const Trash = () => (
  <Art>
    <defs>
      <linearGradient id="tr"><stop stopColor="#7e8286" /><stop offset=".25" stopColor="#5d6165" /><stop offset=".6" stopColor="#85898c" /><stop offset="1" stopColor="#55595c" /></linearGradient>
    </defs>
    <path d="M17 16L25 81Q27 87 48 87T71 81L79 16Z" fill="url(#tr)" />
    <path d="M27 74Q48 82 69 74L68.500 80Q66 84.500 48 84.500T28 80Z" fill="#a2a5a8" opacity=".7" />
    <ellipse cx="48" cy="16.500" rx="31" ry="7" fill="#3b3e42" stroke="#a9acb0" strokeWidth="1.500" />
    <path d="M22 14L30 7L38 10L44 8L48 13L56 6L64 12L74 11L72 18L64 23H34L26 20Z" fill="#ececec" />
    <path d="M28 18L36 13L44 17L40 23H32ZM52 12L58 10L62 18L56 20Z" fill="#3e3c3d" />
    <path d="M40 14L46 12L47 18L42 19Z" fill="#5fc07a" /><path d="M32 19L40 18L38 23H34Z" fill="#d5643a" /><path d="M55 15L60 15L62 20L57 20Z" fill="#3970c0" />
  </Art>
);

/* ---------- dock ---------- */

interface App { icon: ReactNode; name: string; badge?: string; open?: boolean }

const apps: App[] = [
  { name: "Finder", icon: <Finder />, open: true },
  { name: "Unknown", icon: <Question /> },
  { name: "Launchpad", icon: <Launchpad /> },
  { name: "Settings", icon: <Settings />, badge: "2" },
  { name: "Recorder", icon: <Recorder /> },
  { name: "Calendar", icon: <CalendarIcon />, badge: "14" },
  { name: "Reminders", icon: <Reminders />, badge: "3" },
  { name: "Slack", icon: <Slack />, open: true },
  { name: "Photos", icon: <Photos /> },
  { name: "FaceTime", icon: <FaceTime />, badge: "19" },
  { name: "Chrome", icon: <Chrome />, open: true },
  { name: "Music", icon: <Music />, open: true },
  { name: "Word", icon: <Word />, open: true },
  { name: "Safari", icon: <Safari />, open: true },
  { name: "Messages", icon: <Messages />, badge: "6", open: true },
  { name: "App Store", icon: <AppStore />, badge: "1" },
  { name: "VS Code", icon: <VSCode />, open: true },
  { name: "Insomnia", icon: <Insomnia />, open: true },
  { name: "Eclipse", icon: <Eclipse /> },
  { name: "Podcasts", icon: <Podcasts /> },
  { name: "Siri", icon: <SiriArt id="siri-dock" /> },
  { name: "Minecraft", icon: <Minecraft /> },
  { name: "TextEdit", icon: <TextEdit /> },
  { name: "Terminal", icon: <Terminal />, open: true },
  { name: "Zoom", icon: <Zoom /> },
  { name: "Discord", icon: <Discord />, open: true },
];

const recents: App[] = [
  { name: "Preview", icon: <Preview /> },
  { name: "Apple TV", icon: <AppleTV />, open: true },
  { name: "Dictionary", icon: <Dictionary /> },
];

const files: App[] = [
  { name: "Text file", icon: <TxtFile /> },
  { name: "Finder window", icon: <FinderWindow /> },
  { name: "Trash", icon: <Trash /> },
];

function DockItem({ app }: { app: App }) {
  return (
    <div className="relative flex w-[97.050px] shrink-0 flex-col items-center pt-[6px]">
      <div className="size-[96px]">{app.icon}</div>
      {app.open && <span className="mt-[4px] size-[8px] rounded-full bg-[#9a9fab]" />}
      {app.badge && (
        <span className="absolute left-[62px] top-[10px] flex size-[34px] items-center justify-center rounded-full bg-[#dc4a3b] text-[21px] leading-none tracking-[-1px] text-white shadow-[0_1px_3px_rgba(0,0,0,0.5)]">
          {app.badge}
        </span>
      )}
    </div>
  );
}

function Divider() {
  return (
    <div className="flex w-[43px] shrink-0 justify-center pt-[14px]">
      <div className="h-[88px] w-[2px] bg-[#545a66]" />
    </div>
  );
}

function Dock() {
  return (
    <div className="relative mx-[76px] mt-[2px] flex h-[120px] shrink-0 rounded-t-[10px] border-x-2 border-t-2 border-[#39424e] bg-[#171d29] pl-[5.300px] shadow-[0_0_60px_rgba(0,0,0,0.17)]">
      {apps.map((a) => <DockItem key={a.name} app={a} />)}
      <Divider />
      {recents.map((a) => <DockItem key={a.name} app={a} />)}
      <Divider />
      {files.map((a) => <DockItem key={a.name} app={a} />)}
    </div>
  );
}

export default function App() {
  return (
    <div className="flex h-[2100px] w-[3360px] flex-col overflow-hidden bg-[#050a16] font-['Inter',sans-serif]">
      <MenuBar />
      <div className="flex h-[1932px] shrink-0 flex-col overflow-hidden rounded-t-[12px] rounded-br-[10px] bg-white">
        <div className="h-[222px] shrink-0 rounded-t-[12px] border-x-2 border-t-2 border-[#626467] bg-[#202124]">
          <TabStrip />
          <Toolbar />
          <BookmarksBar />
          <div className="h-[2px] bg-[#242427]" />
        </div>
        <QuizPage />
      </div>
      <Dock />
    </div>
  );
}
